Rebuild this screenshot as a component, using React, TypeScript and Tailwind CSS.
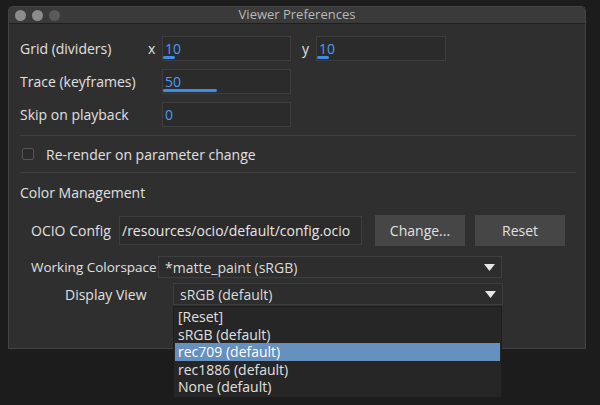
const font = { fontFamily: '"Open Sans", "Noto Sans", sans-serif' };

function Field({ value, bar, className }: { value: string; bar: number; className: string }) {
  return (
    <div className={`relative h-[25px] border border-[#3e3e3e] bg-[#2b2b2b] ${className}`}>
      <span className="absolute left-[2px] top-[1px] text-[14px] text-[#4a9df0]">{value}</span>
      <div className="absolute bottom-[1px] left-0 h-[3px] rounded-sm bg-[#3d8ee6]" style={{ width: bar }} />
    </div>
  );
}

function Select({ value, className }: { value: string; className: string }) {
  return (
    <div className={`flex h-[22px] items-center justify-between border border-[#3e3e3e] bg-[#2d2d2d] pl-[6px] pr-[6px] text-[14px] text-[#dcdcdc] ${className}`}>
      <span>{value}</span>
      <svg width="11" height="7" viewBox="0 0 11 7"><path d="M0 0h11L5.5 7z" fill="#e6e6e6" /></svg>
    </div>
  );
}

export default function App() {
  return (
    <div className="h-[405px] w-[600px] overflow-hidden bg-[#1c1c1c] pl-[8px] pt-[6px]" style={font}>
      <div className="relative h-[343px] w-[578px] rounded-t-[5px] border border-[#444] bg-[#2f2f2f] text-[14px] text-[#e0e0e0]">
        {/* Title bar */}
        <div className="relative flex h-[17px] items-center border-b border-[#1f1f1f] bg-[#3a3a3a] pl-[6px]">
          <div className="flex gap-[6px]">
            <div className="h-[11px] w-[11px] rounded-full bg-[#8c8c8c]" />
            <div className="h-[11px] w-[11px] rounded-full bg-[#8c8c8c]" />
            <div className="h-[11px] w-[11px] rounded-full bg-[#5a5a5a]" />
          </div>
          <div className="absolute inset-0 flex items-center justify-center text-[13px] text-[#b8b8b8]">Viewer Preferences</div>
        </div>

        <div className="px-[11px] whitespace-nowrap">
          <div className="mt-[12px] flex items-center">
            <span className="w-[128px]">Grid (dividers)</span>
            <span className="w-[14px]">x</span>
            <Field value="10" bar={12} className="w-[129px]" />
            <span className="ml-[11px] w-[14px]">y</span>
            <Field value="10" bar={12} className="w-[130px]" />
          </div>
          <div className="mt-[8px] flex items-center">
            <span className="w-[142px]">Trace (keyframes)</span>
            <Field value="50" bar={54} className="w-[129px]" />
          </div>
          <div className="mt-[8px] flex items-center">
            <span className="w-[142px]">Skip on playback</span>
            <Field value="0" bar={0} className="w-[129px]" />
          </div>
          <div className="mt-[8px] h-px w-[556px] bg-[#3f3f3f]" />
          <div className="flex h-[36px] items-center">
            <div className="ml-[2px] mr-[12px] h-[12px] w-[12px] rounded-[2px] border border-[#555] bg-[#2b2b2b]" />
            <span>Re-render on parameter change</span>
          </div>
          <div className="h-px w-[556px] bg-[#3f3f3f]" />
          <div className="mt-[9px]">Color Management</div>
          <div className="mt-[12px] flex items-center">
            <span className="ml-[11px] w-[88px]">OCIO Config</span>
            <div className="flex h-[29px] w-[243px] items-center border border-[#3e3e3e] bg-[#2b2b2b] pl-[2px] text-[#e6e6e6]">/resources/ocio/default/config.ocio</div>
            <div className="ml-[13px] flex h-[31px] w-[90px] items-center justify-center bg-[#464646]">Change...</div>
            <div className="ml-[10px] flex h-[31px] w-[90px] items-center justify-center bg-[#464646]">Reset</div>
          </div>
          <div className="mt-[10px] flex items-center">
            <span className="ml-[11px] w-[127px] text-[13.5px]">Working Colorspace</span>
            <Select value="*matte_paint (sRGB)" className="w-[344px]" />
          </div>
          <div className="mt-[5px] flex items-center">
            <span className="ml-[45px] w-[108px]">Display View</span>
            <Select value="sRGB (default)" className="w-[330px]" />
          </div>
        </div>
      </div>
      {/* Open dropdown menu */}
      <div className="absolute left-[173px] top-[306px] w-[329px] border border-[#1d1d1d] bg-[#262626] py-[1px] text-[14px] leading-[17.5px] text-[#e0e0e0]" style={font}>
        <div className="px-[4px]">[Reset]</div>
        <div className="px-[4px]">sRGB (default)</div>
        <div className="mx-[1px] bg-[#6690bd] px-[3px] text-white">rec709 (default)</div>
        <div className="px-[4px]">rec1886 (default)</div>
        <div className="px-[4px]">None (default)</div>
      </div>
    </div>
  );
}
